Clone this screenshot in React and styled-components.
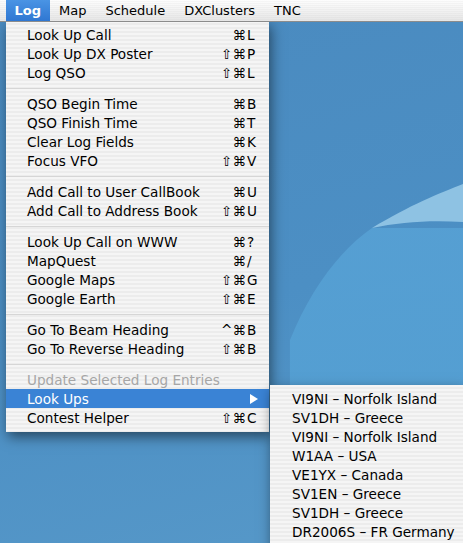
import React from "react";
import styled, { createGlobalStyle } from "styled-components";

const GlobalStyle = createGlobalStyle`
  html, body {
    margin: 0;
    padding: 0;
    width: 463px;
    height: 543px;
    overflow: hidden;
  }
  body {
    font-family: "DejaVu Sans", "Liberation Sans", sans-serif;
  }
`;

const Desktop = styled.div`
  position: relative;
  width: 463px;
  height: 543px;
  overflow: hidden;
  background: linear-gradient(165deg, #4a8abf 0%, #4c8fc4 55%, #5799c9 100%);
`;

const Wallpaper = styled.svg`
  position: absolute;
  inset: 0;
`;

const MenuBar = styled.div`
  position: relative;
  display: flex;
  align-items: stretch;
  height: 21px;
  padding-left: 6px;
  border-bottom: 1px solid #8c8c8c;
  background: repeating-linear-gradient(
      to bottom,
      rgba(255, 255, 255, 0) 0px,
      rgba(255, 255, 255, 0) 1px,
      rgba(0, 0, 0, 0.025) 1px,
      rgba(0, 0, 0, 0.025) 2px
    ),
    linear-gradient(to bottom, #fdfdfd 0%, #f2f2f2 50%, #e6e6e6 100%);
  z-index: 3;
`;

const BarTitle = styled.div`
  display: flex;
  align-items: center;
  padding: 0 ${(p) => (p.$active ? 8.5 : 9.5)}px;
  font-size: 13px;
  font-weight: ${(p) => (p.$active ? 700 : 400)};
  color: ${(p) => (p.$active ? "#fff" : "#000")};
  background: ${(p) =>
    p.$active ? "linear-gradient(to bottom, #4a94e4, #2f77d2)" : "none"};
`;

const Menu = styled.div`
  position: absolute;
  left: ${(p) => p.$left}px;
  top: ${(p) => p.$top}px;
  width: ${(p) => p.$width}px;
  padding: 4px 0 ${(p) => p.$bottom}px;
  background: repeating-linear-gradient(
    to bottom,
    #f5f5f5 0px,
    #f5f5f5 2px,
    #ececec 2px,
    #ececec 4px
  );
  box-shadow: 2px 5px 12px rgba(0, 0, 0, 0.5);
  z-index: ${(p) => p.$z};
`;

const Item = styled.div`
  display: flex;
  align-items: center;
  height: 19px;
  padding-left: ${(p) => p.$indent}px;
  font-size: 13.6px;
  color: ${(p) => (p.$selected ? "#fff" : p.$disabled ? "#a6a6a6" : "#000")};
  background: ${(p) => (p.$selected ? "#3a83d5" : "transparent")};
  white-space: nowrap;
`;

const Label = styled.span`
  flex: 1;
`;

const Shortcut = styled.span`
  display: flex;
  align-items: center;
  margin-right: 8px;
`;

const Mods = styled.span`
  width: 40px;
  text-align: right;
  padding-right: 1px;
`;

const Key = styled.span`
  width: 14px;
  text-align: left;
`;

const Arrow = styled.svg`
  margin-right: 11px;
`;

const Separator = styled.div`
  height: 12px;
  display: flex;
  align-items: center;
  &::after {
    content: "";
    flex: 1;
    height: 1px;
    background: #d6d6d6;
  }
`;

const logMenu = [
  ["Look Up Call", "⌘", "L"],
  ["Look Up DX Poster", "⇧⌘", "P"],
  ["Log QSO", "⇧⌘", "L"],
  null,
  ["QSO Begin Time", "⌘", "B"],
  ["QSO Finish Time", "⌘", "T"],
  ["Clear Log Fields", "⌘", "K"],
  ["Focus VFO", "⇧⌘", "V"],
  null,
  ["Add Call to User CallBook", "⌘", "U"],
  ["Add Call to Address Book", "⇧⌘", "U"],
  null,
  ["Look Up Call on WWW", "⌘", "?"],
  ["MapQuest", "⌘", "/"],
  ["Google Maps", "⇧⌘", "G"],
  ["Google Earth", "⇧⌘", "E"],
  null,
  ["Go To Beam Heading", "^⌘", "B"],
  ["Go To Reverse Heading", "⇧⌘", "B"],
  null,
  ["Update Selected Log Entries", "", "", "disabled"],
  ["Look Ups", "", "", "submenu"],
  ["Contest Helper", "⇧⌘", "C"],
];

const lookUps = [
  "VI9NI – Norfolk Island",
  "SV1DH – Greece",
  "VI9NI – Norfolk Island",
  "W1AA – USA",
  "VE1YX – Canada",
  "SV1EN – Greece",
  "SV1DH – Greece",
  "DR2006S – FR Germany",
];

export default function App() {
  return (
    <Desktop>
      <GlobalStyle />
      <Wallpaper width="463" height="543" viewBox="0 0 463 543">
        <defs>
          <linearGradient id="lower" x1="0" y1="0" x2="0" y2="1">
            <stop offset="0" stopColor="#58a3d6" />
            <stop offset="1" stopColor="#52a0d4" />
          </linearGradient>
        </defs>
        <path
          d="M372 228 C 340 250, 310 290, 290 340 L 290 543 L 463 543 L 463 228 Z"
          fill="url(#lower)"
          opacity="0.8"
        />
        <path
          d="M463 184 C 440 193, 410 205, 372 228 C 400 222, 430 220, 463 222 Z"
          fill="#8ec2e3"
        />
      </Wallpaper>
      <MenuBar>
        <BarTitle $active>Log</BarTitle>
        <BarTitle>Map</BarTitle>
        <BarTitle>Schedule</BarTitle>
        <BarTitle>DXClusters</BarTitle>
        <BarTitle>TNC</BarTitle>
      </MenuBar>
      <Menu $left={6} $top={21} $width={263} $bottom={5} $z={2}>
        {logMenu.map((row, i) => {
          if (!row) return <Separator key={i} />;
          const [label, mods, key, kind] = row;
          return (
            <Item
              key={i}
              $indent={21}
              $disabled={kind === "disabled"}
              $selected={kind === "submenu"}
            >
              <Label>{label}</Label>
              {kind === "submenu" ? (
                <Arrow width="8" height="10" viewBox="0 0 8 10">
                  <path d="M0 0 L8 5 L0 10 Z" fill="#fff" />
                </Arrow>
              ) : key ? (
                <Shortcut>
                  <Mods>{mods}</Mods>
                  <Key>{key}</Key>
                </Shortcut>
              ) : null}
            </Item>
          );
        })}
      </Menu>
      <Menu $left={270} $top={385} $width={193} $bottom={6} $z={4}>
        {lookUps.map((s, i) => (
          <Item key={i} $indent={22}>
            <Label>{s}</Label>
          </Item>
        ))}
      </Menu>
    </Desktop>
  );
}
